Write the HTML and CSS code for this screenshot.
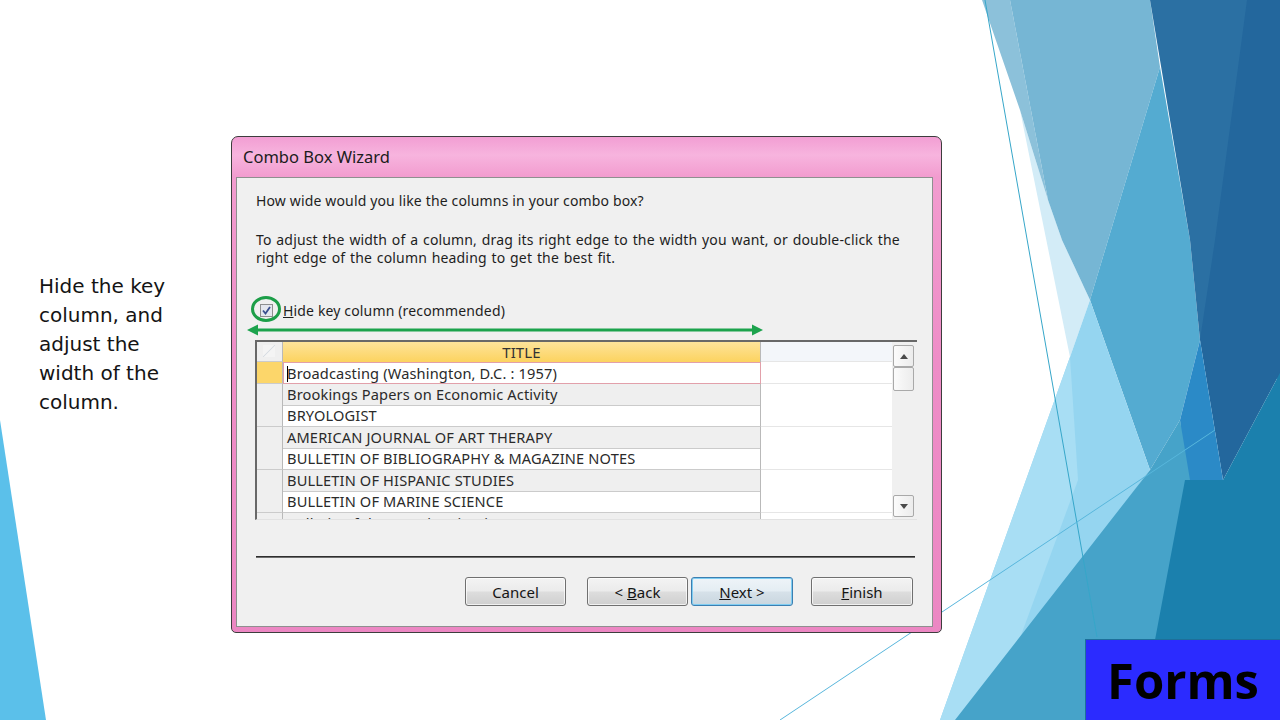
FILE: index.html
```html
<!DOCTYPE html>
<html lang="en">

<head>
    <meta charset="UTF-8">
    <meta name="viewport" content="width=device-width, initial-scale=1.0">
    <title>Forms - Combo Box Wizard</title>
    <link rel="stylesheet" href="styles.css">
</head>

<body>
    <div class="backdrop">
        <svg viewBox="0 0 1280 720" width="1280" height="720">
            <polygon points="0,420 46,720 0,720" fill="#5bc0ea" />
            <polygon points="1020,110 1048,200 1062,240 1090,300 1070,357" fill="#d3ecf7" />
            <polygon points="982,0 1010,0 1048,200 1020,110" fill="#8cc1da" />
            <polygon points="1010,0 1150,0 1160,67 1090,300 1062,240 1048,200" fill="#76b6d4" />
            <polygon points="1160,67 1190,240 1200,340 1180,420 1150,470 1090,300" fill="#54abd1" />
            <polygon points="1150,0 1280,0 1280,380 1200,340 1190,240" fill="#2b70a3" />
            <polygon points="1247,0 1280,0 1280,373 1223,480 1200,340 1215,240" fill="#23679d" />
            <polygon points="1070,357 1090,300 1150,470 963,720 940,720" fill="#95d5f0" />
            <polygon points="1070,357 1078,480 990,720 940,720" fill="#a8def4" />
            <polygon points="1200,340 1223,480 1200,560 1185,480 1180,420" fill="#2b8ac7" />
            <polygon points="955,720 1150,470 1180,420 1190,480 1160,720" fill="#46a3c9" />
            <polygon points="1280,373 1280,720 1140,720 1185,480 1223,480" fill="#1b80ad" />
            <line x1="985" y1="0" x2="1097" y2="637" stroke="#36a6c9" stroke-width="1" />
            <line x1="780" y1="720" x2="1215" y2="430" stroke="#58b6dc" stroke-width="1" />
        </svg>
    </div>

    <div class="slide">
        <p class="note">Hide the key column, and adjust the width of the column.</p>

        <div class="dialog">
            <div class="titlebar">Combo Box Wizard</div>
            <div class="panel">
                <p class="question">How wide would you like the columns in your combo box?</p>
                <p class="explain">To adjust the width of a column, drag its right edge to the width you want, or double-click the<br>right edge of the column heading to get the best fit.</p>

                <div class="check-row">
                    <span class="checkbox">
                        <svg viewBox="0 0 13 13" width="13" height="13">
                            <rect x="0.5" y="0.5" width="12" height="12" fill="#e4e7ee" stroke="#8e8f8f" />
                            <path d="M3 6.5 L5.5 9.5 L10 3" fill="none" stroke="#3a4f8f" stroke-width="1.8" />
                        </svg>
                    </span>
                    <span><u>H</u>ide key column (recommended)</span>
                </div>

                <svg class="width-arrow" viewBox="0 0 516 12" width="516" height="12">
                    <line x1="8" y1="6" x2="508" y2="6" stroke="#1ca34d" stroke-width="3" />
                    <polygon points="0,6 11,0.5 11,11.5" fill="#1ca34d" />
                    <polygon points="516,6 505,0.5 505,11.5" fill="#1ca34d" />
                </svg>

                <div class="grid">
                    <div class="sheet">
                        <div class="row head">
                            <div class="sel corner"></div>
                            <div class="cell title">TITLE</div>
                            <div class="cell rest"></div>
                        </div>
                        <div class="row current">
                            <div class="sel"></div>
                            <div class="cell"><span class="caret"></span>Broadcasting (Washington, D.C. : 1957)</div>
                            <div class="cell rest"></div>
                        </div>
                        <div class="row alt">
                            <div class="sel"></div>
                            <div class="cell">Brookings Papers on Economic Activity</div>
                            <div class="cell rest"></div>
                        </div>
                        <div class="row">
                            <div class="sel"></div>
                            <div class="cell">BRYOLOGIST</div>
                            <div class="cell rest"></div>
                        </div>
                        <div class="row alt">
                            <div class="sel"></div>
                            <div class="cell">AMERICAN JOURNAL OF ART THERAPY</div>
                            <div class="cell rest"></div>
                        </div>
                        <div class="row">
                            <div class="sel"></div>
                            <div class="cell">BULLETIN OF BIBLIOGRAPHY &amp; MAGAZINE NOTES</div>
                            <div class="cell rest"></div>
                        </div>
                        <div class="row alt">
                            <div class="sel"></div>
                            <div class="cell">BULLETIN OF HISPANIC STUDIES</div>
                            <div class="cell rest"></div>
                        </div>
                        <div class="row">
                            <div class="sel"></div>
                            <div class="cell">BULLETIN OF MARINE SCIENCE</div>
                            <div class="cell rest"></div>
                        </div>
                        <div class="row alt">
                            <div class="sel"></div>
                            <div class="cell">Bulletin of the Atomic Scientists</div>
                            <div class="cell rest"></div>
                        </div>
                    </div>
                    <div class="scrollbar">
                        <div class="scroll-btn"><span class="arrow-up"></span></div>
                        <div class="scroll-thumb"></div>
                        <div class="scroll-track"></div>
                        <div class="scroll-btn"><span class="arrow-down"></span></div>
                    </div>
                </div>

                <div class="separator"></div>

                <div class="buttons">
                    <button class="btn cancel">Cancel</button>
                    <button class="btn back">&lt; <u>B</u>ack</button>
                    <button class="btn next default"><u>N</u>ext &gt;</button>
                    <button class="btn finish"><u>F</u>inish</button>
                </div>
            </div>
        </div>
    </div>

    <div class="badge">Forms</div>
</body>

</html>
```

FILE: styles.css
```css
body {
    margin: 0;
    width: 1280px;
    height: 720px;
    background: #fff;
    overflow: hidden;
    position: relative;
    font-family: "Noto Sans", "Open Sans", sans-serif;
}

.backdrop {
    position: absolute;
    top: 0;
    left: 0;
    width: 1280px;
    height: 720px;
    z-index: 0;
}

.backdrop svg {
    display: block;
}

.slide {
    position: relative;
    z-index: 1;
    display: flex;
    align-items: flex-start;
}

.note {
    margin: 272px 0 0 39px;
    width: 150px;
    font-family: "DejaVu Sans", sans-serif;
    font-size: 20px;
    line-height: 29px;
    color: #141414;
}

/* wizard window */

.dialog {
    margin: 136px 0 0 42px;
    width: 711px;
    height: 497px;
    box-sizing: border-box;
    border: 1px solid #3d3d3d;
    border-radius: 7px 7px 5px 5px;
    background: linear-gradient(to bottom, #f29ed3 0, #f7b4de 18px, #f29ccf 40px, #ee8dc7 45%, #ec87c3 100%);
    padding: 0 8px 5px 4px;
    display: flex;
    flex-direction: column;
}

.titlebar {
    height: 40px;
    line-height: 40px;
    padding-left: 7px;
    font-size: 16.5px;
    color: #1c1c1c;
}

.panel {
    flex: 1;
    background: #f0f0f0;
    border: 1px solid #8f8f8f;
    padding: 0 17px 0 19px;
    display: flex;
    flex-direction: column;
    font-size: 14px;
    letter-spacing: 0.15px;
    color: #1e1e1e;
}

.question {
    margin: 14px 0 0;
    line-height: 18px;
}

.explain {
    margin: 21px 0 0;
    line-height: 18px;
    word-spacing: 1px;
}

.check-row {
    margin: 34px 0 0 4px;
    height: 18px;
    display: flex;
    align-items: center;
    gap: 10px;
}

.checkbox {
    position: relative;
    display: flex;
    width: 13px;
    height: 13px;
}

/* green annotation ring around the check box */
.checkbox::after {
    content: '';
    position: absolute;
    left: -9px;
    top: -8px;
    width: 24px;
    height: 20px;
    border: 3px solid #1c9e48;
    border-radius: 50%;
}

.width-arrow {
    display: block;
    margin: 5px 0 4px -9px;
}

/* data sheet */

.grid {
    margin-left: -1px;
    width: 662px;
    height: 180px;
    box-sizing: border-box;
    border-top: 2px solid #686868;
    border-left: 2px solid #686868;
    border-bottom: 1px solid #e2e2e2;
    display: flex;
    background: #fff;
    letter-spacing: 0.15px;
}

.sheet {
    flex: 1;
    overflow: hidden;
}

.row {
    display: grid;
    grid-template-columns: 26px 478px 1fr;
    height: 21.5px;
}

.row.head {
    height: 20px;
}

.sel {
    box-sizing: border-box;
    background: #efefef;
    border-right: 1px solid #b9b9b9;
    border-bottom: 1px solid #cbcbcb;
}

.sel.corner {
    background: linear-gradient(135deg, #f4f4f4 45%, #d8dde3 50%, #f4f4f4 55%) no-repeat 6px 3px / 12px 12px, #efefef;
}

.cell {
    box-sizing: border-box;
    padding-left: 4px;
    line-height: 21px;
    font-size: 14.6px;
    color: #2a2a2a;
    white-space: nowrap;
    border-right: 1px solid #b9b9b9;
    border-bottom: 1px solid #cbcbcb;
}

.cell.rest {
    background: #fff;
    border-right: none;
    border-bottom: 1px solid #e6e6e6;
}

.row.alt .cell {
    background: #efefef;
}

.row.alt .cell.rest {
    background: #fff;
}

.head .cell.title {
    background: linear-gradient(to bottom, #fde39a, #fcd35f);
    text-align: center;
    padding-left: 0;
    font-size: 15px;
    line-height: 20px;
    color: #333;
    border-bottom: none;
}

.head .cell.rest {
    background: #f3f6fa;
}

.current .sel {
    background: #fcd66a;
}

.current .cell:not(.rest) {
    border: 1px solid #e2a0aa;
    line-height: 20px;
    padding-left: 3px;
}

.caret {
    display: inline-block;
    width: 1px;
    height: 16px;
    margin-right: -1px;
    background: #000;
    vertical-align: -3px;
}

.scrollbar {
    width: 25px;
    box-sizing: border-box;
    padding: 3px 3px 2px 1px;
    background: #f0f0f0;
    display: flex;
    flex-direction: column;
}

.scroll-btn,
.scroll-thumb {
    box-sizing: border-box;
    height: 22px;
    border: 1px solid #a9a9a9;
    border-radius: 2px;
    background: linear-gradient(to right, #fbfbfb, #ececec);
    display: flex;
    align-items: center;
    justify-content: center;
}

.scroll-thumb {
    height: 24px;
}

.scroll-track {
    flex: 1;
}

.arrow-up,
.arrow-down {
    width: 0;
    height: 0;
    border-left: 4px solid transparent;
    border-right: 4px solid transparent;
}

.arrow-up {
    border-bottom: 5px solid #4a4a4a;
}

.arrow-down {
    border-top: 5px solid #4a4a4a;
}

.separator {
    margin-top: 36px;
    width: 659px;
    height: 1px;
    background: #2e2e2e;
    border-bottom: 1px solid #6e6e6e;
}

/* command buttons */

.buttons {
    margin-top: 19px;
    display: flex;
    justify-content: flex-end;
    padding-right: 2px;
}

.btn {
    width: 101px;
    height: 29px;
    box-sizing: border-box;
    border: 1px solid #707070;
    border-radius: 3px;
    background: linear-gradient(to bottom, #f3f3f3 0, #ebebeb 48%, #dddddd 52%, #cfcfcf 100%);
    box-shadow: inset 0 0 0 1px rgba(255, 255, 255, 0.7);
    font-family: "Noto Sans", "Open Sans", sans-serif;
    font-size: 15px;
    color: #151515;
    padding: 0;
}

.btn.cancel {
    margin-right: 21px;
}

.btn.back {
    margin-right: 3px;
}

.btn.next {
    width: 102px;
    margin-right: 18px;
}

.btn.finish {
    width: 102px;
}

.btn.default {
    border-color: #3c7fb1;
    box-shadow: inset 0 0 0 1px #7fcdf2;
    background: linear-gradient(to bottom, #eef4f8 0, #e4edf3 48%, #d6e1e9 52%, #c9d6df 100%);
}

/* slide title badge */

.badge {
    position: absolute;
    right: 0;
    bottom: 0;
    width: 195px;
    height: 81px;
    box-sizing: border-box;
    border-top: 1px solid #1d6f9a;
    border-left: 1px solid #1d6f9a;
    background: #2b2bff;
    display: flex;
    align-items: center;
    justify-content: center;
    font-family: "Open Sans", sans-serif;
    font-weight: 700;
    font-size: 49px;
    color: #000;
    z-index: 2;
}
```
